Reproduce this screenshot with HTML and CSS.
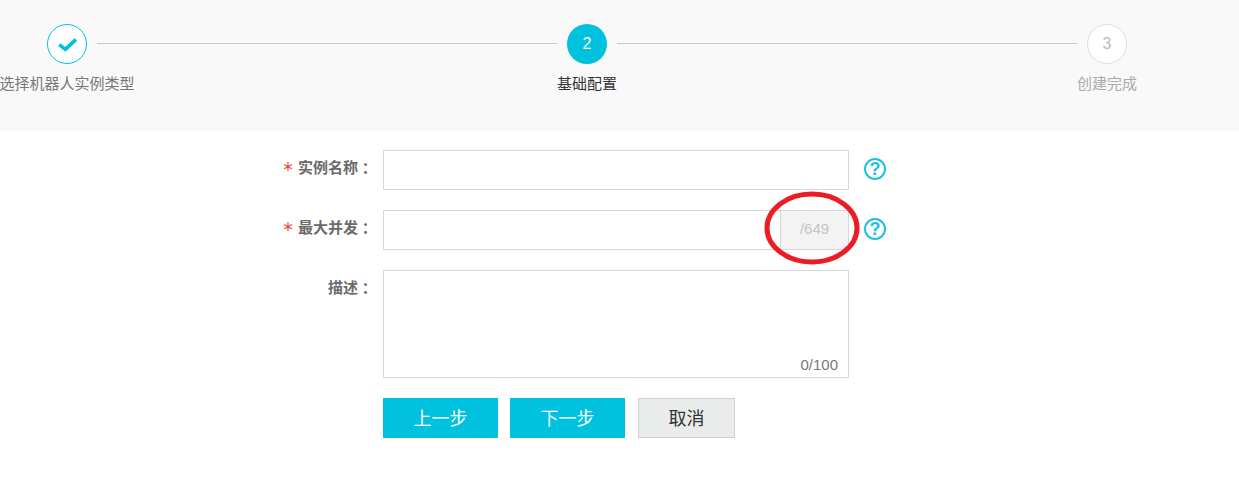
FILE: index.html
```html
<!DOCTYPE html>
<html lang="zh-CN">
<head>
    <meta charset="UTF-8">
    <meta name="viewport" content="width=device-width, initial-scale=1.0">
    <title>基础配置</title>
    <link rel="stylesheet" href="styles.css">
</head>
<body>
    <div class="steps">
        <div class="step step-done">
            <div class="step-circle">
                <svg width="20" height="16" viewBox="0 0 20 16"><path d="M2.2 8.6 L8.4 13.4 L19 3.4" fill="none" stroke="#00c1de" stroke-width="3.6"/></svg>
            </div>
            <div class="step-label">选择机器人实例类型</div>
        </div>
        <div class="step-line"></div>
        <div class="step step-active">
            <div class="step-circle">2</div>
            <div class="step-label">基础配置</div>
        </div>
        <div class="step-line"></div>
        <div class="step step-todo">
            <div class="step-circle">3</div>
            <div class="step-label">创建完成</div>
        </div>
    </div>

    <form class="form">
        <div class="form-group">
            <label class="form-label"><span class="required">＊</span>实例名称<span class="colon">：</span></label>
            <div class="field"><input class="input" type="text"></div>
            <span class="help">?</span>
        </div>
        <div class="form-group">
            <label class="form-label"><span class="required">＊</span>最大并发<span class="colon">：</span></label>
            <div class="field field-suffix">
                <input class="input" type="text">
                <span class="suffix">/649</span>
            </div>
            <span class="help">?</span>
            <!-- hand drawn annotation from the screenshot -->
            <svg class="circle-mark" width="100" height="80" viewBox="0 0 100 80"><ellipse cx="50" cy="39" rx="45" ry="34" fill="none" stroke="#ed1c24" stroke-width="5"/></svg>
        </div>
        <div class="form-group">
            <label class="form-label">描述<span class="colon">：</span></label>
            <div class="field field-area">
                <textarea class="textarea"></textarea>
                <span class="counter">0/100</span>
            </div>
        </div>
        <div class="buttons">
            <button type="button" class="btn btn-primary">上一步</button>
            <button type="button" class="btn btn-primary">下一步</button>
            <button type="button" class="btn btn-default">取消</button>
        </div>
    </form>
</body>
</html>
```

FILE: styles.css
```css
body {
    margin: 0;
    font-family: "Liberation Sans", "Noto Sans CJK SC", sans-serif;
    background: #fff;
    overflow-x: hidden;
}
.steps {
    display: flex;
    align-items: flex-start;
    height: 131px;
    box-sizing: border-box;
    padding: 24px 0 0 47px;
    background: #f9f9f9;
}
.step {
    display: flex;
    flex-direction: column;
    align-items: center;
    width: 40px;
}
.step-circle {
    display: flex;
    align-items: center;
    justify-content: center;
    flex: none;
    width: 40px;
    height: 40px;
    box-sizing: border-box;
    padding-bottom: 1px;
    border-radius: 50%;
    font-size: 16px;
}
.step-label {
    margin-top: 10px;
    font-size: 15px;
    line-height: 20px;
    white-space: nowrap;
}
.step-line {
    flex: none;
    width: 460px;
    height: 1px;
    margin: 19px 10px 0;
    background: #c9c9c9;
}
.step-done .step-circle {
    border: 1px solid #00c1de;
    background: #fff;
}
.step-done .step-label {
    color: #777;
}
.step-active .step-circle {
    background: #00c1de;
    color: #fff;
}
.step-active .step-label {
    color: #333;
}
.step-todo .step-circle {
    border: 1px solid #ddd;
    background: #fff;
    color: #bbb;
}
.step-todo .step-label {
    color: #aaa;
}
.form {
    padding: 19px 0 0 270px;
}
.form-group {
    position: relative;
    display: flex;
    align-items: flex-start;
    margin-bottom: 20px;
}
.form-label {
    flex: none;
    display: flex;
    justify-content: flex-end;
    width: 103px;
    margin-right: 10px;
    font-size: 15px;
    font-weight: bold;
    line-height: 36px;
    color: #6b6b6b;
}
.required {
    margin-right: 4px;
    color: #e64b3c;
    font-size: 12px;
}
.colon {
    font-family: "Noto Sans CJK TC", sans-serif;
}
.field {
    position: relative;
    display: flex;
    width: 466px;
    height: 40px;
}
.input {
    flex: 1;
    min-width: 0;
    box-sizing: border-box;
    height: 40px;
    border: 1px solid #d7d7d7;
    outline: none;
    background: #fff;
}
.suffix {
    flex: none;
    width: 69px;
    box-sizing: border-box;
    margin-left: -1px;
    border: 1px solid #d7d7d7;
    background: #f3f3f3;
    color: #c4c4c4;
    font-size: 15px;
    line-height: 36px;
    text-align: center;
}
.field-area {
    height: 108px;
}
.textarea {
    width: 100%;
    height: 108px;
    box-sizing: border-box;
    border: 1px solid #d7d7d7;
    outline: none;
    resize: none;
}
.counter {
    position: absolute;
    right: 11px;
    bottom: 4px;
    font-size: 15px;
    line-height: 18px;
    color: #777;
}
.help {
    flex: none;
    width: 22px;
    height: 22px;
    box-sizing: border-box;
    margin: 8px 0 0 15px;
    border: 2px solid #1fc0dd;
    border-radius: 50%;
    color: #1fc0dd;
    font-size: 18px;
    font-weight: bold;
    line-height: 18px;
    text-align: center;
}
.circle-mark {
    position: absolute;
    left: 492px;
    top: -21px;
}
.buttons {
    display: flex;
    margin-left: 113px;
}
.btn {
    height: 40px;
    box-sizing: border-box;
    padding: 0 0 2px;
    font-family: inherit;
    font-size: 18px;
    cursor: pointer;
}
.btn-primary {
    width: 115px;
    margin-right: 12px;
    border: none;
    background: #00c1de;
    color: #fff;
}
.btn-default {
    width: 97px;
    margin-left: 1px;
    border: 1px solid #d0d0d0;
    background: #eaebeb;
    color: #333;
}
```
